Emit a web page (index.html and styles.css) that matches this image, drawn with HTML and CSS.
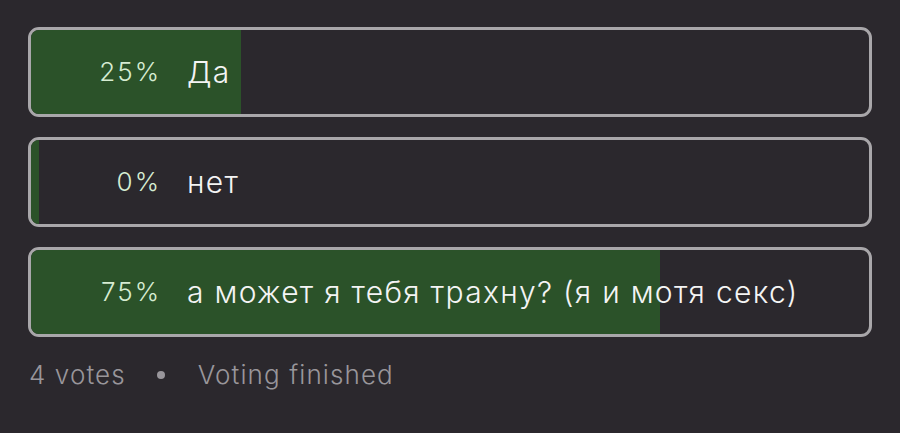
FILE: index.html
```html
<!DOCTYPE html>
<html>
<head>
<meta charset="utf-8">
<link rel="stylesheet" href="styles.css">
</head>
<body>
<div class="poll">
  <div class="option">
    <div class="fill" style="width:25%"></div>
    <span class="pct">25%</span>
    <span class="label">Да</span>
  </div>
  <div class="option">
    <div class="fill fill-min" style="width:0%"></div>
    <span class="pct">0%</span>
    <span class="label">нет</span>
  </div>
  <div class="option">
    <div class="fill" style="width:75%"></div>
    <span class="pct">75%</span>
    <span class="label">а может я тебя трахну? (я и мотя секс)</span>
  </div>
  <div class="footer">
    <span>4 votes</span>
    <span class="dot"></span>
    <span>Voting finished</span>
  </div>
</div>
</body>
</html>
```
FILE: styles.css
```css
html, body {
  margin: 0;
  padding: 0;
  background: #2b282d;
}
body {
  width: 900px;
  height: 433px;
  overflow: hidden;
  font-family: "Inter", "Noto Sans", sans-serif;
  font-weight: 300;
}
.poll {
  padding: 27px 28px 0 28px;
  display: flex;
  flex-direction: column;
  gap: 20px;
}
.option {
  position: relative;
  height: 84px;
  border: 3px solid #a9a7aa;
  border-radius: 11px;
  overflow: hidden;
  display: flex;
  align-items: center;
}
.fill {
  position: absolute;
  left: 0;
  top: 0;
  bottom: 0;
  background: #2b5229;
}
.fill-min {
  min-width: 8px;
}
.pct {
  position: relative;
  width: 130px;
  text-align: right;
  font-size: 26px;
  letter-spacing: 2px;
  color: #d6ecd2;
  margin-top: -2px;
}
.label {
  position: relative;
  margin-left: 26px;
  font-size: 30px;
  letter-spacing: 1.3px;
  color: #f4f4f4;
}
.footer {
  display: flex;
  align-items: center;
  padding-left: 1px;
  margin-top: 2px;
  font-size: 26px;
  letter-spacing: 1.1px;
  color: #99969b;
}
.dot {
  width: 8px;
  height: 8px;
  border-radius: 50%;
  background: #99969b;
  margin: 0 33px 0 31px;
}
```
